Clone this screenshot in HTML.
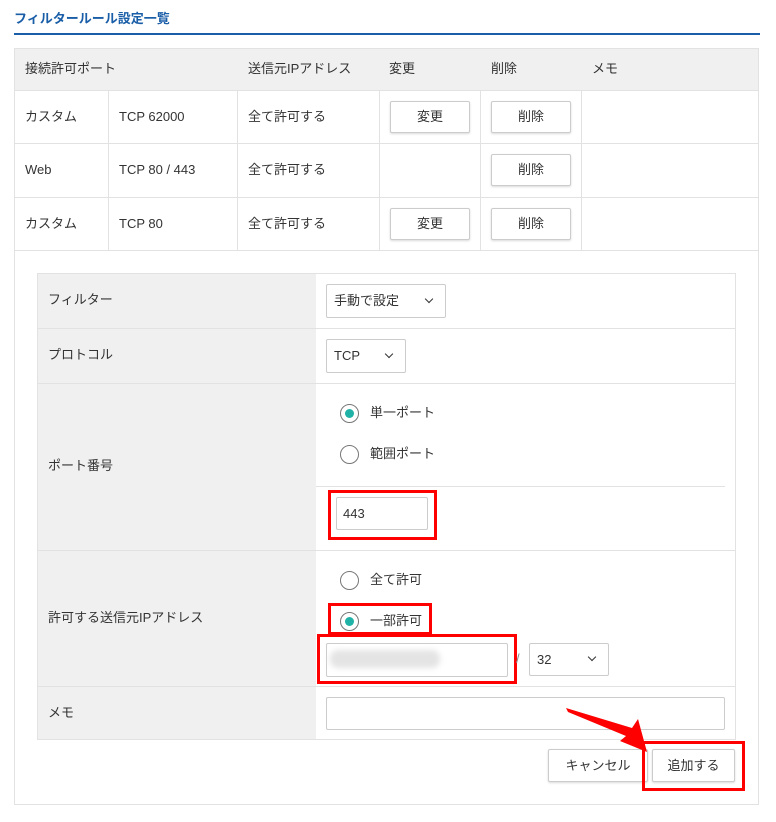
<!DOCTYPE html>
<html><head><meta charset="utf-8"><style>
*{margin:0;padding:0;box-sizing:border-box}
body{width:776px;height:822px;background:#fff;font-family:"Liberation Sans","Noto Sans CJK JP",sans-serif;font-size:13px;color:#333;position:relative;overflow:hidden}
.a{position:absolute}
.t{position:absolute;white-space:nowrap;line-height:16px}
.btn{position:absolute;border:1px solid #ccc;border-radius:2px;background:#fff;box-shadow:0 1px 2px rgba(0,0,0,.15);text-align:center;font-size:13px;color:#333}
.inp{position:absolute;border:1px solid #ccc;background:#fff;border-radius:2px}
.red{position:absolute;border:3px solid #f00}
.rad{position:absolute;width:19px;height:19px;border:1px solid #777;border-radius:50%;background:#fff}
.rad.on::after{content:"";position:absolute;left:4px;top:4px;width:9px;height:9px;border-radius:50%;background:#20b2a6}
.chev{position:absolute;width:6px;height:6px;border-right:1.8px solid #333;border-bottom:1.8px solid #333;transform:rotate(45deg)}
.hl{position:absolute;height:1px;background:#e2e2e2}
.vl{position:absolute;width:1px;background:#e2e2e2}
</style></head><body>
<div class="t" style="left:14px;top:11px;font-size:13px;font-weight:bold;color:#1a5ea8">フィルタールール設定一覧</div>
<div class="a" style="left:14px;top:33px;width:746px;height:2px;background:#1a5ea8"></div>

<div class="a" style="left:14px;top:48px;width:745px;height:757px;border:1px solid #e2e2e2"></div>
<div class="a" style="left:15px;top:49px;width:743px;height:41px;background:#f0f0f0"></div>
<div class="hl" style="left:14px;top:90px;width:745px"></div>
<div class="hl" style="left:14px;top:143px;width:745px"></div>
<div class="hl" style="left:14px;top:197px;width:745px"></div>
<div class="hl" style="left:14px;top:250px;width:745px"></div>
<div class="vl" style="left:108px;top:90px;height:160px"></div>
<div class="vl" style="left:237px;top:90px;height:160px"></div>
<div class="vl" style="left:379px;top:90px;height:160px"></div>
<div class="vl" style="left:480px;top:90px;height:160px"></div>
<div class="vl" style="left:581px;top:90px;height:160px"></div>

<div class="t" style="left:25px;top:61px">接続許可ポート</div>
<div class="t" style="left:248px;top:61px">送信元IPアドレス</div>
<div class="t" style="left:389px;top:61px">変更</div>
<div class="t" style="left:491px;top:61px">削除</div>
<div class="t" style="left:592px;top:61px">メモ</div>

<div class="t" style="left:25px;top:109px">カスタム</div>
<div class="t" style="left:119px;top:109px">TCP 62000</div>
<div class="t" style="left:248px;top:109px">全て許可する</div>
<div class="btn" style="left:390px;top:101px;width:80px;height:32px;line-height:30px">変更</div>
<div class="btn" style="left:491px;top:101px;width:80px;height:32px;line-height:30px">削除</div>

<div class="t" style="left:25px;top:162px">Web</div>
<div class="t" style="left:119px;top:162px">TCP 80 / 443</div>
<div class="t" style="left:248px;top:162px">全て許可する</div>
<div class="btn" style="left:491px;top:154px;width:80px;height:32px;line-height:30px">削除</div>

<div class="t" style="left:25px;top:216px">カスタム</div>
<div class="t" style="left:119px;top:216px">TCP 80</div>
<div class="t" style="left:248px;top:216px">全て許可する</div>
<div class="btn" style="left:390px;top:208px;width:80px;height:32px;line-height:30px">変更</div>
<div class="btn" style="left:491px;top:208px;width:80px;height:32px;line-height:30px">削除</div>

<div class="a" style="left:37px;top:273px;width:699px;height:467px;border:1px solid #e2e2e2"></div>
<div class="a" style="left:38px;top:274px;width:278px;height:465px;background:#f0f0f0"></div>
<div class="hl" style="left:37px;top:328px;width:699px"></div>
<div class="hl" style="left:37px;top:383px;width:699px"></div>
<div class="hl" style="left:37px;top:550px;width:699px"></div>
<div class="hl" style="left:37px;top:686px;width:699px"></div>
<div class="hl" style="left:316px;top:486px;width:409px"></div>

<div class="t" style="left:48px;top:292px">フィルター</div>
<div class="t" style="left:48px;top:347px">プロトコル</div>
<div class="t" style="left:48px;top:458px">ポート番号</div>
<div class="t" style="left:48px;top:610px">許可する送信元IPアドレス</div>
<div class="t" style="left:48px;top:705px">メモ</div>

<div class="inp" style="left:326px;top:284px;width:120px;height:34px"></div>
<div class="t" style="left:334px;top:293px">手動で設定</div>
<div class="chev" style="left:426px;top:296px"></div>
<div class="inp" style="left:326px;top:339px;width:80px;height:34px"></div>
<div class="t" style="left:334px;top:348px">TCP</div>
<div class="chev" style="left:386px;top:351px"></div>

<div class="rad on" style="left:340px;top:404px"></div>
<div class="t" style="left:370px;top:405px">単一ポート</div>
<div class="rad" style="left:340px;top:445px"></div>
<div class="t" style="left:370px;top:446px">範囲ポート</div>

<div class="inp" style="left:336px;top:497px;width:92px;height:33px"></div>
<div class="t" style="left:343px;top:506px">443</div>
<div class="red" style="left:328px;top:490px;width:109px;height:50px"></div>

<div class="rad" style="left:340px;top:571px"></div>
<div class="t" style="left:370px;top:572px">全て許可</div>
<div class="rad on" style="left:340px;top:612px"></div>
<div class="t" style="left:370px;top:613px">一部許可</div>
<div class="red" style="left:328px;top:603px;width:104px;height:32px"></div>

<div class="inp" style="left:326px;top:643px;width:182px;height:34px"></div>
<div class="a" style="left:330px;top:650px;width:110px;height:18px;background:#e4e4e4;border-radius:8px;filter:blur(3px)"></div>
<div class="red" style="left:317px;top:634px;width:200px;height:50px"></div>
<div class="t" style="left:516px;top:651px;color:#888">/</div>
<div class="inp" style="left:529px;top:643px;width:80px;height:33px"></div>
<div class="t" style="left:537px;top:652px">32</div>
<div class="chev" style="left:589px;top:654px"></div>

<div class="inp" style="left:326px;top:697px;width:399px;height:33px"></div>

<div class="btn" style="left:548px;top:749px;width:100px;height:33px;line-height:31px">キャンセル</div>
<div class="btn" style="left:652px;top:749px;width:83px;height:33px;line-height:31px">追加する</div>
<div class="red" style="left:642px;top:741px;width:103px;height:50px"></div>

<svg class="a" style="left:0;top:0" width="776" height="822"><polygon points="566,708 568,712 626,736 620,741 647,752 638,719 632,728" fill="#f00"/></svg>
</body></html>
